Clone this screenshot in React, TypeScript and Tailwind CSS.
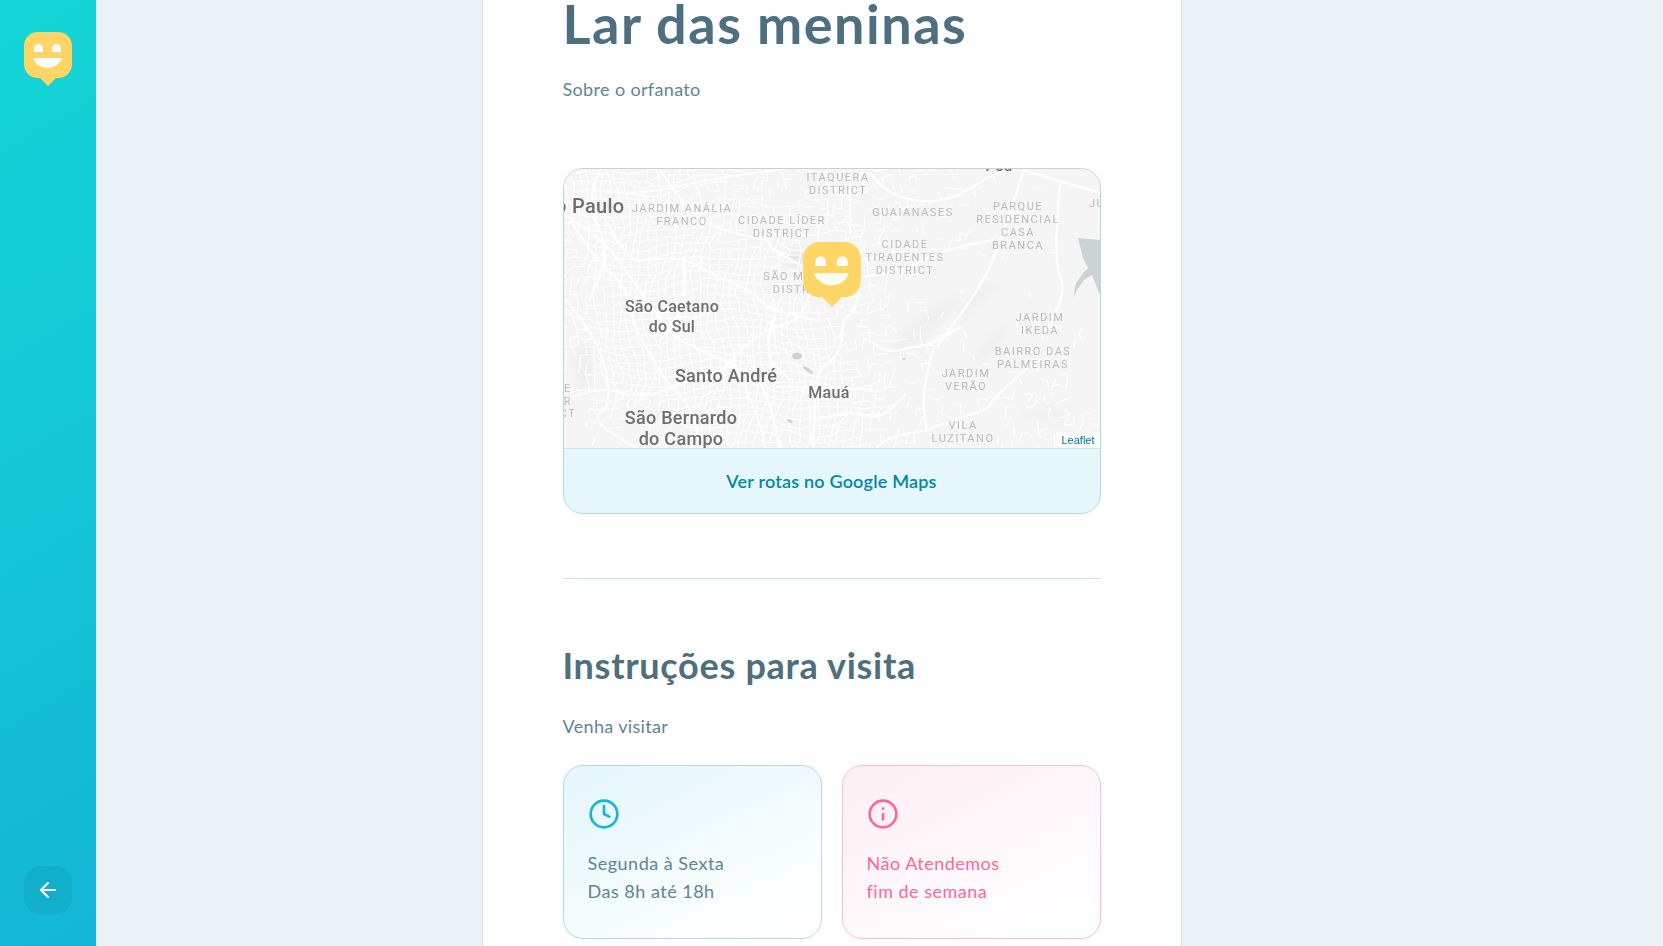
import { FiArrowLeft, FiClock, FiInfo } from 'react-icons/fi';

const nunito = { fontFamily: 'Lato, "Noto Sans", sans-serif' };

// the smiley pin, same drawing for the sidebar logo and the map marker
const Logo = ({ className }: { className: string }) => (
  <svg viewBox="0 0 48 54" className={className}>
    <path
      d="M14 0H34C42 0 48 6 48 14V32C48 40 42 46 34 46H32L24 54L16 46H14C6 46 0 40 0 32V14C0 6 6 0 14 0Z"
      fill="#ffd666"
    />
    <path d="M10 20V16.5C10 14 12 12 14.5 12S19 14 19 16.5V20Z" fill="#fff" />
    <path d="M28 20V16.5C28 14 30 12 32.5 12S37 14 37 16.5V20Z" fill="#fff" />
    <path d="M9 26H38C36 32 30 36 23.5 36S11 32 9 26Z" fill="#fff" />
  </svg>
);

// small seeded random so the street texture is the same on every load
const makeRandom = (seed: number) => () => {
  seed = (seed * 1664525 + 1013904223) % 4294967296;
  return seed / 4294967296;
};

const hotspots = [
  { x: 590, y: 185, r: 60, w: 1.1 },
  { x: 640, y: 340, r: 80, w: 0.9 },
  { x: 745, y: 395, r: 60, w: 1.2 },
  { x: 700, y: 250, r: 120, w: 0.6 },
  { x: 800, y: 300, r: 90, w: 0.45 },
  { x: 840, y: 415, r: 55, w: 0.7 },
  { x: 870, y: 190, r: 55, w: 0.3 },
  { x: 1040, y: 420, r: 60, w: 0.22 },
];

const buildStreets = () => {
  const random = makeRandom(42);
  const step = 8;
  const warp = (x: number, y: number) => ({
    x: x + Math.sin(y / 27) * 5 + Math.sin((x + y) / 13) * 2.5 + random() * 4 - 2,
    y: y + Math.sin(x / 31) * 5 + Math.cos((x - y) / 15) * 2.5 + random() * 4 - 2,
  });
  const points: { x: number; y: number }[][] = [];
  for (let i = 0; i < 70; i++) {
    const col = [];
    for (let j = 0; j < 38; j++) {
      col.push(warp(560 + i * step, 165 + j * step));
    }
    points.push(col);
  }
  let d = '';
  points.forEach((col, i) =>
    col.forEach((p, j) => {
      let density = 0.035;
      hotspots.forEach((h) => {
        const dist = ((p.x - h.x) ** 2 + (p.y - h.y) ** 2) / (h.r * h.r);
        density += h.w * Math.exp(-dist);
      });
      if (points[i + 1] && random() < density) {
        d += `M${p.x.toFixed(1)} ${p.y.toFixed(1)}L${points[i + 1][j].x.toFixed(1)} ${points[i + 1][j].y.toFixed(1)}`;
      }
      if (col[j + 1] && random() < density) {
        d += `M${p.x.toFixed(1)} ${p.y.toFixed(1)}L${col[j + 1].x.toFixed(1)} ${col[j + 1].y.toFixed(1)}`;
      }
    }),
  );
  return d;
};

const streets = buildStreets();

// rounds the corners of a polyline with quadratic curves through the midpoints
const smooth = (pts: number[][]) => {
  let d = `M${pts[0][0]} ${pts[0][1]}`;
  for (let i = 1; i < pts.length - 1; i++) {
    const mx = (pts[i][0] + pts[i + 1][0]) / 2;
    const my = (pts[i][1] + pts[i + 1][1]) / 2;
    d += `Q${pts[i][0]} ${pts[i][1]} ${mx} ${my}`;
  }
  const last = pts[pts.length - 1];
  return `${d}L${last[0]} ${last[1]}`;
};

const mainRoads = [
  [[607, 193], [650, 193], [697, 182], [737, 175], [777, 170], [800, 166]],
  [[607, 223], [627, 260], [647, 260], [683, 257], [717, 277], [750, 290], [770, 310], [817, 320]],
  [[570, 220], [593, 257], [627, 287], [633, 323], [647, 350], [668, 385], [690, 405], [702, 450]],
  [[767, 240], [772, 250], [797, 263], [812, 272]],
  [[810, 293], [803, 320], [768, 328], [740, 350], [722, 372]],
  [[843, 320], [843, 343], [833, 360], [815, 373], [815, 420], [812, 450]],
  [[860, 250], [860, 307], [843, 320]],
  [[873, 343], [887, 353], [907, 348], [930, 345], [960, 327]],
  [[777, 387], [815, 387], [873, 390]],
  [[933, 350], [925, 380], [923, 407], [927, 430]],
  [[993, 400], [1020, 373], [1040, 360]],
  [[927, 430], [960, 417], [987, 410], [993, 400]],
  [[877, 447], [887, 437], [930, 430]],
  [[850, 166], [850, 233]],
  [[870, 173], [883, 190], [913, 202], [953, 200], [987, 177], [1007, 170]],
  [[1023, 173], [997, 250], [983, 283], [937, 347]],
  [[1023, 170], [1100, 193]],
  [[1060, 183], [1053, 263], [1067, 290], [1043, 337]],
  [[860, 277], [893, 275], [943, 250], [993, 240]],
  [[566, 300], [600, 340], [612, 405], [590, 420], [640, 450]],
  [[750, 360], [770, 400], [780, 450]],
  [[735, 365], [760, 420], [765, 450]],
  [[564, 215], [600, 235], [640, 290], [670, 335], [700, 350], [735, 365]],
  [[564, 400], [600, 385], [640, 400], [690, 380], [735, 365]],
  [[660, 170], [690, 215], [720, 230], [767, 240]],
  [[683, 257], [690, 300], [660, 340]],
  [[600, 170], [585, 200], [610, 250], [590, 300]],
  [[780, 300], [760, 350], [790, 380]],
  [[815, 420], [850, 410], [880, 420], [905, 395]],
].map(smooth);

const smallLabels = [
  { text: 'ITAQUERA', x: 838, y: 181 },
  { text: 'DISTRICT', x: 838, y: 194 },
  { text: 'JARDIM ANÁLIA', x: 682, y: 212 },
  { text: 'FRANCO', x: 682, y: 225 },
  { text: 'CIDADE LÍDER', x: 782, y: 224 },
  { text: 'DISTRICT', x: 782, y: 237 },
  { text: 'GUAIANASES', x: 913, y: 216 },
  { text: 'PARQUE', x: 1018, y: 210 },
  { text: 'RESIDENCIAL', x: 1018, y: 223 },
  { text: 'CASA', x: 1018, y: 236 },
  { text: 'BRANCA', x: 1018, y: 249 },
  { text: 'CIDADE', x: 905, y: 248 },
  { text: 'TIRADENTES', x: 905, y: 261 },
  { text: 'DISTRICT', x: 905, y: 274 },
  { text: 'SÃO MATEUS', x: 804, y: 280 },
  { text: 'DISTRICT', x: 802, y: 293 },
  { text: 'JARDIM', x: 1040, y: 321 },
  { text: 'IKEDA', x: 1040, y: 334 },
  { text: 'BAIRRO DAS', x: 1033, y: 355 },
  { text: 'PALMEIRAS', x: 1033, y: 368 },
  { text: 'JARDIM', x: 966, y: 377 },
  { text: 'VERÃO', x: 966, y: 390 },
  { text: 'VILA', x: 963, y: 429 },
  { text: 'LUZITANO', x: 963, y: 442 },
  { text: 'JU', x: 1097, y: 207 },
  { text: 'E', x: 568, y: 392 },
  { text: 'R', x: 568, y: 405 },
  { text: 'CT', x: 568, y: 417 },
];

const cityLabels = [
  { text: 'São Paulo', x: 578, y: 213, size: 20 },
  { text: 'Poá', x: 999, y: 171, size: 15 },
  { text: 'São Caetano', x: 672, y: 312, size: 16 },
  { text: 'do Sul', x: 672, y: 332, size: 16 },
  { text: 'Santo André', x: 726, y: 382, size: 18 },
  { text: 'Mauá', x: 829, y: 398, size: 16 },
  { text: 'São Bernardo', x: 681, y: 424, size: 18 },
  { text: 'do Campo', x: 681, y: 445, size: 18 },
];

const MapDrawing = () => (
  <svg viewBox="564 169 536 279" className="block h-[279px] w-full bg-[#f5f5f5]">
    <defs>
      <filter id="soft">
        <feGaussianBlur stdDeviation="3" />
      </filter>
    </defs>
    <g fill="#efefef" filter="url(#soft)">
      <ellipse cx="584" cy="365" rx="10" ry="22" />
      <ellipse cx="800" cy="258" rx="14" ry="8" fill="#e6e8e8" />
      <ellipse cx="925" cy="325" rx="40" ry="9" transform="rotate(-40 925 325)" />
      <ellipse cx="975" cy="300" rx="24" ry="6" transform="rotate(-40 975 300)" />
      <ellipse cx="990" cy="345" rx="22" ry="5" transform="rotate(-50 990 345)" />
      <ellipse cx="1050" cy="415" rx="26" ry="8" fill="#f2f2f2" />
    </g>
    <path d={streets} fill="none" stroke="#ffffff" strokeWidth="1.1" strokeLinecap="round" />
    <g fill="none" stroke="#ffffff" strokeWidth="2.2" strokeLinejoin="round" strokeLinecap="round">
      {mainRoads.map((d) => (
        <path key={d} d={d} />
      ))}
    </g>
    <g fill="#cbd3d5">
      <path d="M1078 238L1100 240V295L1094 280L1092 275L1084 280L1077 290L1073 298L1076 283L1084 272L1088 268L1083 258Z" />
      <ellipse cx="797" cy="356" rx="5" ry="3.5" />
      <ellipse cx="808" cy="370" rx="6" ry="1.8" transform="rotate(35 808 370)" />
      <ellipse cx="790" cy="421" rx="3" ry="1.5" transform="rotate(30 790 421)" />
      <ellipse cx="904" cy="359" rx="2" ry="1" />
    </g>
    <g
      fill="#bababa"
      fontSize="11"
      letterSpacing="1.5"
      textAnchor="middle"
      fontFamily='Roboto, "Liberation Sans", sans-serif'
    >
      {smallLabels.map((l) => (
        <text key={l.text + l.x + l.y} x={l.x} y={l.y}>
          {l.text}
        </text>
      ))}
    </g>
    <g
      fill="#6e6e6e"
      fontWeight="500"
      letterSpacing="0.3"
      textAnchor="middle"
      fontFamily='Roboto, "Liberation Sans", sans-serif'
    >
      {cityLabels.map((l) => (
        <text key={l.text} x={l.x} y={l.y} fontSize={l.size}>
          {l.text}
        </text>
      ))}
    </g>
  </svg>
);

export default function App() {
  return (
    <div className="h-[946px] overflow-hidden bg-[#ebf2f5]" style={nunito}>
      <aside className="fixed left-0 top-0 flex h-full w-24 flex-col items-center justify-between bg-[linear-gradient(329.54deg,#15b6d6_0%,#15d6d6_100%)] py-8">
        <Logo className="h-[54px] w-12" />
        <button className="flex h-12 w-12 items-center justify-center rounded-2xl bg-[#12afcb]">
          <FiArrowLeft size={24} color="#fff" />
        </button>
      </aside>

      <main className="flex justify-center">
        <div className="w-[700px] border-x border-[#d3e2e5] bg-white px-20 pb-20">
          <h1 className="-mt-[3px] text-[54px] font-bold leading-[54px] tracking-[1.5px] text-[#4d6f80]">
            Lar das meninas
          </h1>
          <p className="mt-[24px] text-lg leading-7 tracking-[0.35px] text-[#5c8599]">Sobre o orfanato</p>

          <div className="relative mt-[65px] overflow-hidden rounded-[20px] border border-[#b3dae2] bg-[#e6f7fb]">
            <MapDrawing />
            <div className="absolute right-0 top-[263px] bg-white/70 px-[5px] text-[11px] leading-4 text-[#0078a8] [font-family:'Liberation_Sans',sans-serif]">
              Leaflet
            </div>
            <div className="absolute left-[239px] top-[73px] h-[65px] w-[58px]">
              <Logo className="h-full w-full" />
            </div>
            <div className="border-t border-[#c9e4ec] pb-[18px] pt-[19px] text-center text-lg font-semibold leading-[27px] tracking-[0.2px] text-[#0089a5]">
              Ver rotas no Google Maps
            </div>
          </div>

          <hr className="mt-16 border-t border-[#d3e2e5]" />

          <h2 className="mt-[63px] text-4xl font-bold leading-[46px] tracking-[0.7px] text-[#4d6f80]">
            Instruções para visita
          </h2>
          <p className="mt-6 text-lg leading-7 tracking-[0.35px] text-[#5c8599]">Venha visitar</p>

          <div className="mt-[25px] grid grid-cols-2 gap-5">
            <div className="rounded-[20px] border border-[#b3dae2] bg-[linear-gradient(154.16deg,#e6f7fb_7.85%,#ffffff_91.03%)] px-6 pb-[33px] pt-8 text-lg leading-7 tracking-[0.5px] text-[#5c8599]">
              <FiClock size={32} color="#15b6d6" />
              <div className="mt-[19px]">
                Segunda à Sexta
                <br />
                Das 8h até 18h
              </div>
            </div>
            <div className="rounded-[20px] border border-[#ffbcd4] bg-[linear-gradient(154.16deg,#fdf0f5_7.85%,#ffffff_91.03%)] px-6 pb-[33px] pt-8 text-lg leading-7 tracking-[0.5px] text-[#ff669d]">
              <FiInfo size={32} color="#ff669d" />
              <div className="mt-[19px]">
                Não Atendemos
                <br />
                fim de semana
              </div>
            </div>
          </div>
        </div>
      </main>
    </div>
  );
}
